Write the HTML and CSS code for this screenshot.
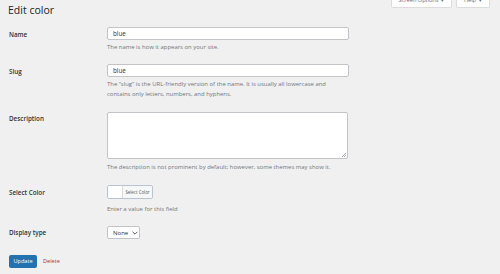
FILE: index.html
```html
<!DOCTYPE html>
<html>
<head>
<meta charset="utf-8">
<link rel="stylesheet" href="styles.css">
</head>
<body>
<div class="wrap">
  <div class="screen-meta">
    <span class="tab">Screen Options <span class="caret">▾</span></span>
    <span class="tab">Help <span class="caret">▾</span></span>
  </div>
  <h1 class="title">Edit color</h1>
  <form class="form">
    <div class="row row-name">
      <div class="th"><label class="label">Name</label></div>
      <div class="td">
        <div class="input">blue</div>
        <p class="desc">The name is how it appears on your site.</p>
      </div>
    </div>
    <div class="row row-slug">
      <div class="th"><label class="label">Slug</label></div>
      <div class="td">
        <div class="input">blue</div>
        <p class="desc">The “slug” is the URL-friendly version of the name. It is usually all lowercase and<br>contains only letters, numbers, and hyphens.</p>
      </div>
    </div>
    <div class="row row-descr">
      <div class="th"><label class="label">Description</label></div>
      <div class="td">
        <div class="textarea"><span class="grip"></span></div>
        <p class="desc desc-ta">The description is not prominent by default; however, some themes may show it.</p>
      </div>
    </div>
    <div class="row row-color">
      <div class="th"><label class="label">Select Color</label></div>
      <div class="td">
        <div class="color-btn"><span class="swatch"></span><span class="color-text">Select Color</span></div>
        <p class="desc desc-color">Enter a value for this field</p>
      </div>
    </div>
    <div class="row row-display">
      <div class="th"><label class="label label-display">Display type</label></div>
      <div class="td">
        <div class="select">None <svg class="chev" viewBox="0 0 10 6" width="6" height="4"><path d="M1 1l4 4 4-4" fill="none" stroke="#50575e" stroke-width="1.6"/></svg></div>
      </div>
    </div>
    <div class="actions">
      <span class="btn-primary">Update</span>
      <span class="delete">Delete</span>
    </div>
  </form>
</div>
</body>
</html>
```
FILE: styles.css
```css
html, body {
  margin: 0;
  padding: 0;
  background: #f0f0f1;
}
body {
  width: 500px;
  height: 274px;
  overflow: hidden;
  font-family: "Open Sans", "Noto Sans", sans-serif;
  color: #1d2327;
}
.wrap {
  padding: 0 9px 0 8px;
}
.screen-meta {
  float: right;
  display: flex;
  gap: 4px;
  margin-top: -6px;
  margin-right: 1px;
}
.tab {
  display: flex;
  align-items: center;
  height: 12.5px;
  padding: 0 6px;
  background: #fff;
  border: 1px solid #dcdcde;
  border-top: none;
  border-radius: 0 0 2px 2px;
  font-size: 5.6px;
  color: #646970;
  gap: 3px;
}
.tab:first-child { width: 47px; justify-content: center; }
.tab:last-child { width: 20px; justify-content: center; }
.caret { font-size: 5px; }
.title {
  margin: 0;
  padding-top: 3px;
  font-size: 10.5px;
  line-height: 14px;
  font-weight: 400;
  color: #1d2327;
}
.form {
  margin-top: 10px;
}
.row {
  display: flex;
}
.th {
  width: 98px;
  flex: none;
  padding-left: 1px;
}
.label {
  display: block;
  padding-top: 2.5px;
  font-size: 6.3px;
  line-height: 9px;
  font-weight: 600;
  color: #2c3338;
}
.label-display { padding-top: 2px; }
.td { flex: none; width: 242px; }
.input {
  box-sizing: border-box;
  height: 13px;
  width: 242px;
  background: #fff;
  border: 1px solid #c3c4c7;
  border-radius: 2px;
  padding-left: 5px;
  font-size: 6.3px;
  line-height: 11px;
  color: #2c3338;
}
.desc {
  margin: 2.8px 0 0;
  font-size: 5.95px;
  line-height: 9.5px;
  color: #72777c;
}
.row-name { margin-bottom: 12px; }
.row-slug { margin-bottom: 12.5px; }
.textarea {
  position: relative;
  box-sizing: border-box;
  height: 47px;
  width: 241px;
  background: #fff;
  border: 1px solid #c3c4c7;
  border-radius: 2px;
}
.grip {
  position: absolute;
  right: 1px;
  bottom: 1px;
  width: 4px;
  height: 4px;
  background: linear-gradient(135deg, transparent 45%, #a7aaad 45%, #a7aaad 55%, transparent 55%, transparent 70%, #a7aaad 70%, #a7aaad 80%, transparent 80%);
}
.desc-ta { margin-top: 4px; }
.row-descr { margin-bottom: 13px; }
.color-btn {
  box-sizing: border-box;
  display: flex;
  width: 46px;
  height: 14px;
  border: 1px solid #b7c3d0;
  border-radius: 2px;
  background: #fff;
  overflow: hidden;
}
.swatch { width: 14px; flex: none; background: #fff; }
.color-text {
  flex: 1;
  display: flex;
  align-items: center;
  justify-content: center;
  border-left: 1px solid #dcdcde;
  background: #f6f7f7;
  font-size: 4.4px;
  color: #50575e;
}
.desc-color { margin-top: 5.5px; }
.row-color { margin-bottom: 12px; }
.select {
  box-sizing: border-box;
  display: flex;
  align-items: center;
  gap: 4px;
  width: 33px;
  height: 13px;
  padding-left: 5px;
  background: #fff;
  border: 1px solid #c3c4c7;
  border-radius: 2px;
  font-size: 6px;
  color: #2c3338;
}
.actions {
  display: flex;
  align-items: center;
  margin-top: 15.5px;
  padding-left: 1px;
  gap: 6px;
}
.btn-primary {
  display: flex;
  align-items: center;
  justify-content: center;
  width: 28px;
  height: 13px;
  background: #2271b1;
  border-radius: 2px;
  color: #fff;
  font-size: 5.6px;
}
.delete {
  color: #b32d2e;
  font-size: 5.6px;
}
```
